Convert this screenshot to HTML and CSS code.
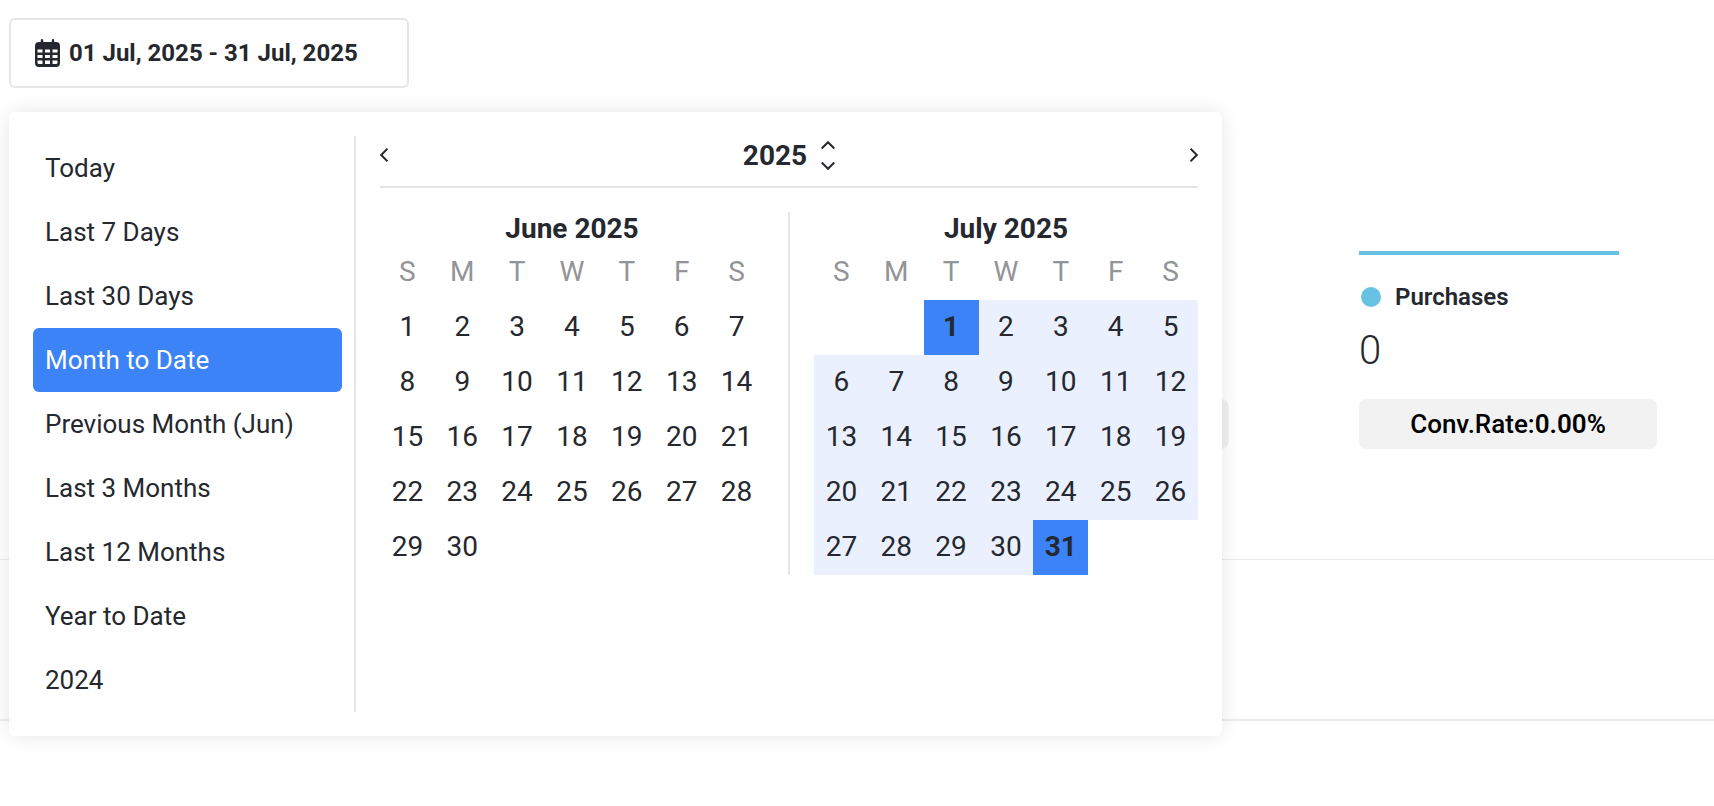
FILE: index.html
```html
<!DOCTYPE html>
<html lang="en">
<head>
    <meta charset="utf-8">
    <title>Conversions</title>
    <link rel="stylesheet" href="styles.css">
</head>

<body>
    <div class="toolbar">
        <button type="button" class="range-button">
            <svg class="calendar-icon" viewBox="0 0 25 28" width="25" height="28">
                <path fill="currentColor" fill-rule="evenodd" d="M7 0a1.200 1.200 0 0 1 1.200 1.200V3H16.800V1.200a1.200 1.200 0 0 1 2.400 0V3H21a4 4 0 0 1 4 4V24a4 4 0 0 1-4 4H4a4 4 0 0 1-4-4V7a4 4 0 0 1 4-4H5.800V1.200A1.200 1.200 0 0 1 7 0ZM2.500 10.500V13.500H7.500V10.500ZM10 10.500V13.500H15V10.500ZM17.500 10.500V13.500H22.500V10.500ZM2.500 16V19H7.500V16ZM10 16V19H15V16ZM17.500 16V19H22.500V16ZM2.500 21.500V24a1.500 1.500 0 0 0 1.500 1H7.500V21.500ZM10 21.500V25H15V21.500ZM17.500 21.500V25H21A1.500 1.500 0 0 0 22.500 24V21.500Z"/>
            </svg>
            01 Jul, 2025 - 31 Jul, 2025
        </button>

        <div class="picker">
            <ul class="presets">
                <li><button type="button">Today</button></li>
                <li><button type="button">Last 7 Days</button></li>
                <li><button type="button">Last 30 Days</button></li>
                <li><button type="button" class="active">Month to Date</button></li>
                <li><button type="button">Previous Month (Jun)</button></li>
                <li><button type="button">Last 3 Months</button></li>
                <li><button type="button">Last 12 Months</button></li>
                <li><button type="button">Year to Date</button></li>
                <li><button type="button">2024</button></li>
            </ul>

            <div class="calendar">
                <div class="calendar-header">
                    <button type="button" aria-label="Previous month">
                        <svg viewBox="0 0 8 14" width="8" height="14"><path d="M7.500 .7 1.200 7l6.300 6.300"/></svg>
                    </button>
                    <div class="year">
                        2025
                        <div class="year-arrows">
                            <button type="button" aria-label="Next year">
                                <svg viewBox="0 0 14 8" width="14" height="8"><path d="M.7 7.500 7 1.200l6.300 6.300"/></svg>
                            </button>
                            <button type="button" aria-label="Previous year">
                                <svg viewBox="0 0 14 8" width="14" height="8"><path d="M.7 .5 7 6.800 13.300 .5"/></svg>
                            </button>
                        </div>
                    </div>
                    <button type="button" aria-label="Next month">
                        <svg viewBox="0 0 8 14" width="8" height="14"><path d="M.5 .7 6.800 7 .5 13.300"/></svg>
                    </button>
                </div>

                <div class="months">
                    <table class="month">
                        <caption>June 2025</caption>
                        <thead>
                            <tr><th>S</th><th>M</th><th>T</th><th>W</th><th>T</th><th>F</th><th>S</th></tr>
                        </thead>
                        <tbody>
                            <tr><td>1</td><td>2</td><td>3</td><td>4</td><td>5</td><td>6</td><td>7</td></tr>
                            <tr><td>8</td><td>9</td><td>10</td><td>11</td><td>12</td><td>13</td><td>14</td></tr>
                            <tr><td>15</td><td>16</td><td>17</td><td>18</td><td>19</td><td>20</td><td>21</td></tr>
                            <tr><td>22</td><td>23</td><td>24</td><td>25</td><td>26</td><td>27</td><td>28</td></tr>
                            <tr><td>29</td><td>30</td><td></td><td></td><td></td><td></td><td></td></tr>
                        </tbody>
                    </table>

                    <div class="divider"></div>

                    <table class="month selected">
                        <caption>July 2025</caption>
                        <thead>
                            <tr><th>S</th><th>M</th><th>T</th><th>W</th><th>T</th><th>F</th><th>S</th></tr>
                        </thead>
                        <tbody>
                            <tr><td></td><td></td><td class="edge">1</td><td>2</td><td>3</td><td>4</td><td>5</td></tr>
                            <tr><td>6</td><td>7</td><td>8</td><td>9</td><td>10</td><td>11</td><td>12</td></tr>
                            <tr><td>13</td><td>14</td><td>15</td><td>16</td><td>17</td><td>18</td><td>19</td></tr>
                            <tr><td>20</td><td>21</td><td>22</td><td>23</td><td>24</td><td>25</td><td>26</td></tr>
                            <tr><td>27</td><td>28</td><td>29</td><td>30</td><td class="edge">31</td><td></td><td></td></tr>
                        </tbody>
                    </table>
                </div>
            </div>
        </div>
    </div>

    <section class="stats">
        <div class="stat">
            <div class="rate"></div>
        </div>
        <div class="stat">
            <div class="stat-line"></div>
            <h3><span class="dot"></span>Purchases</h3>
            <p class="stat-value">0</p>
            <div class="rate">Conv.Rate:<b>0.00%</b></div>
        </div>
    </section>
    <section class="details"></section>
</body>
</html>
```
FILE: styles.css
```css
* {
    box-sizing: border-box;
}

body {
    font-family: Roboto, "Liberation Sans", sans-serif;
    margin: 0;
    min-height: 100vh;
    color: #25282e;
    background-color: #fff;
}

button {
    font: inherit;
    color: inherit;
    background: none;
    border: none;
    padding: 0;
    cursor: pointer;
}

svg {
    display: block;
}

.toolbar {
    position: relative;
    padding: 18px 9px 0;
}

.range-button {
    display: flex;
    align-items: center;
    gap: 9px;
    width: 400px;
    height: 70px;
    padding: 0 24px;
    border: 2px solid #e5e5e5;
    border-radius: 6px;
    font-size: 24px;
    font-weight: 700;
}

/* Dropdown */
.picker {
    position: absolute;
    top: 112px;
    left: 9px;
    z-index: 10;
    display: flex;
    padding: 24px;
    background-color: #fff;
    border-radius: 6px;
    box-shadow: 0 0 20px rgba(0, 0, 0, 0.1);
}

.presets {
    list-style: none;
    margin: 0;
    padding: 0 12px 0 0;
    border-right: 2px solid #e5e5e5;
}

.presets button {
    display: block;
    width: 309px;
    height: 64px;
    padding: 0 12px;
    border-radius: 6px;
    font-size: 26px;
    text-align: left;
}

.presets .active {
    background-color: #3b83f7;
    color: #fff;
}

.calendar {
    padding-left: 24px;
}

.calendar-header {
    display: flex;
    justify-content: space-between;
    align-items: center;
    height: 52px;
    padding-bottom: 12px;
    border-bottom: 2px solid #e5e5e5;
}

.calendar-header path {
    fill: none;
    stroke: currentColor;
    stroke-width: 2;
}

.year {
    display: flex;
    align-items: center;
    gap: 14px;
    font-size: 28px;
    font-weight: 700;
}

.year-arrows {
    display: grid;
    gap: 13px;
}

.months {
    display: flex;
    gap: 24px;
    padding-top: 24px;
}

.divider {
    width: 2px;
    background-color: #e5e5e5;
}

.month {
    width: 384px;
    table-layout: fixed;
    border-collapse: collapse;
    font-size: 28px;
    text-align: center;
}

.month caption {
    height: 33px;
    line-height: 33px;
    font-weight: 700;
}

.month th,
.month td {
    height: 55px;
    padding: 0 0 2px;
}

.month th {
    color: #929497;
    font-weight: 400;
}

.selected td:not(:empty) {
    background-color: #eaf0fe;
}

.selected td.edge {
    background-color: #3b83f7;
    font-weight: 700;
}

/* Stats behind the dropdown */
.stats {
    display: flex;
    justify-content: flex-end;
    align-items: flex-end;
    gap: 130px;
    padding: 163px 57px 110px;
    border-bottom: 1px solid #ebebeb;
}

.stat {
    width: 298px;
}

.stat-line {
    width: 260px;
    height: 4px;
    background-color: #66c1e3;
}

.stat h3 {
    display: flex;
    align-items: center;
    gap: 14px;
    margin: 28px 0 0;
    padding-left: 2px;
    font-size: 24px;
    line-height: 28px;
    font-weight: 600;
}

.dot {
    width: 20px;
    height: 20px;
    border-radius: 50%;
    background-color: #66c1e3;
}

.stat-value {
    margin: 16px 0 24px;
    font-size: 40px;
    line-height: 48px;
    font-weight: 300;
}

.rate {
    height: 50px;
    border-radius: 8px;
    background-color: #f2f2f2;
    color: #000;
    font-size: 26px;
    line-height: 50px;
    font-weight: 500;
    text-align: center;
}

.rate b {
    font-weight: 600;
}

.details {
    height: 161px;
    border-bottom: 2px solid #ebebeb;
}
```
